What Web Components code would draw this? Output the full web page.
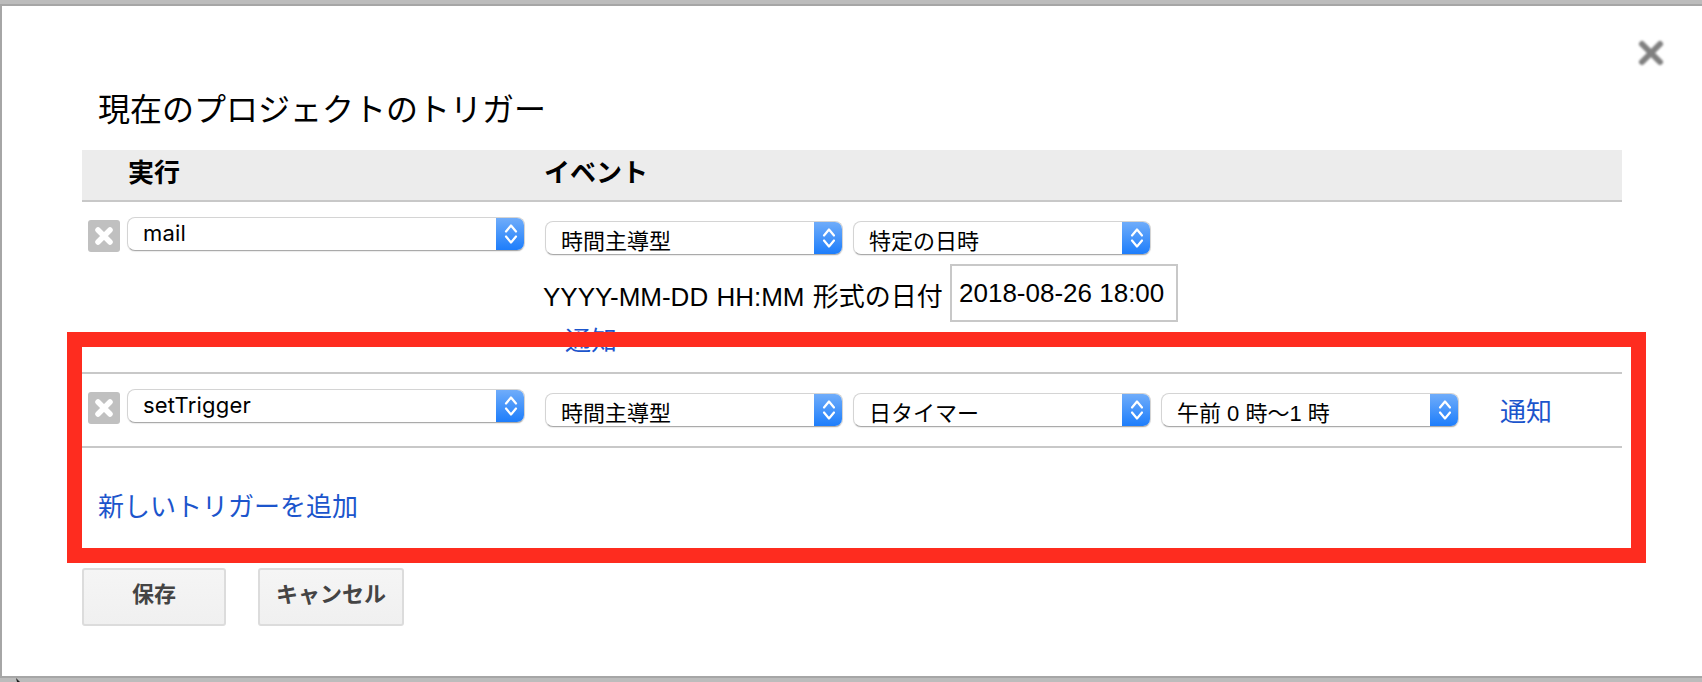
<!DOCTYPE html>
<html lang="ja">
<head>
<meta charset="utf-8">
<title>現在のプロジェクトのトリガー</title>
<style>
  html, body {
    margin: 0;
    height: 682px;
    overflow: hidden;
    background: #bcbcbc;
  }
  .pointer { position: absolute; left: 15px; top: 678px; }
</style>
</head>
<body>
<trigger-dialog heading="現在のプロジェクトのトリガー" add-label="新しいトリガーを追加">
  <trigger-row fn="mail" fn-font="Inter">
    <mac-select label="時間主導型"></mac-select>
    <mac-select label="特定の日時"></mac-select>
    <date-field slot="extra" label="YYYY-MM-DD HH:MM 形式の日付" value="2018-08-26 18:00"></date-field>
    <a slot="notify-below" href="#">通知</a>
  </trigger-row>
  <trigger-row fn="setTrigger" fn-font="Inter">
    <mac-select label="時間主導型"></mac-select>
    <mac-select label="日タイマー"></mac-select>
    <mac-select label="午前 0 時〜1 時"></mac-select>
    <a slot="notify" href="#">通知</a>
  </trigger-row>
</trigger-dialog>
<svg class="pointer" width="6" height="4" viewBox="0 0 6 4"><path d="M1 0l4 4H2z" fill="#222"/></svg>

<script>
  const FONT = '"Liberation Sans", "Noto Sans CJK JP", sans-serif';

  class MacSelect extends HTMLElement {
    connectedCallback() {
      this.attachShadow({mode: 'open'});
      this.shadowRoot.innerHTML = `
        <style>
          :host {
            display: block;
            box-sizing: border-box;
            width: var(--select-width, 298px);
            height: 34px;
            font: 22px ${FONT};
            color: #000;
          }
          .box {
            display: flex;
            height: 100%;
            box-sizing: border-box;
            background: #fff;
            border: 1px solid #d4d4d4;
            border-bottom: 1px solid #aaa;
            border-radius: 8px;
            box-shadow: 0 1px 1px rgba(0,0,0,.08);
            overflow: hidden;
          }
          .text {
            flex: 1;
            padding: var(--select-text-top, 5px) 0 0 var(--select-pad, 15px);
            line-height: 30px;
            white-space: nowrap;
            overflow: hidden;
          }
          .arrow {
            flex: 0 0 29px;
            margin: -1px -1px -1px 0;
            display: flex;
            align-items: center;
            justify-content: center;
            background: linear-gradient(#72aefa, #1b7cfb);
          }
        </style>
        <div class="box">
          <div class="text">${this.getAttribute('label')}</div>
          <div class="arrow">
            <svg width="14" height="24" viewBox="0 0 14 24" fill="none" stroke="#fff" stroke-width="2.2" stroke-linecap="round" stroke-linejoin="round">
              <path d="M2 9.5 7 3.5l5 6"/>
              <path d="M2 14.5 7 20.5l5-6"/>
            </svg>
          </div>
        </div>`;
    }
  }
  customElements.define('mac-select', MacSelect);

  class DateField extends HTMLElement {
    connectedCallback() {
      this.attachShadow({mode: 'open'});
      this.shadowRoot.innerHTML = `
        <style>
          :host {
            display: flex;
            align-items: center;
            gap: 9px;
            margin-top: 9px;
            font: 26px ${FONT};
            color: #000;
          }
          .label { width: 396px; white-space: nowrap; margin-left: -2px; margin-right: 2px; padding-top: 3px; word-spacing: 1px; }
          .input {
            box-sizing: border-box;
            width: 228px;
            height: 58px;
            border: 2px solid #c8c8c8;
            padding: 9px 0 0 7px;
            line-height: 36px;
            white-space: nowrap;
          }
        </style>
        <span class="label">${this.getAttribute('label')}</span>
        <div class="input">${this.getAttribute('value')}</div>`;
    }
  }
  customElements.define('date-field', DateField);

  class RemoveButton extends HTMLElement {
    connectedCallback() {
      this.attachShadow({mode: 'open'});
      this.shadowRoot.innerHTML = `
        <style>
          :host {
            display: flex;
            align-items: center;
            justify-content: center;
            flex: none;
            width: 32px;
            height: 32px;
            background: #c0c0c0;
            border-radius: 3px;
          }
        </style>
        <svg width="20" height="20" viewBox="0 0 20 20" stroke="#fff" stroke-width="5.5" stroke-linecap="round">
          <path d="M4 4l12 12M16 4L4 16"/>
        </svg>`;
    }
  }
  customElements.define('remove-button', RemoveButton);

  class TriggerRow extends HTMLElement {
    connectedCallback() {
      this.attachShadow({mode: 'open'});
      const fn = this.getAttribute('fn');
      const fnFont = this.getAttribute('fn-font');
      this.shadowRoot.innerHTML = `
        <style>
          :host {
            display: flex;
            box-sizing: border-box;
            padding: 15px 0 19px 6px;
            border-bottom: 2px solid #c8c8c8;
            font: 26px ${FONT};
          }
          remove-button { margin-top: 3px; }
          .fn {
            margin-left: 7px;
            --select-width: 398px;
            --select-pad: 15px;
            --select-text-top: 0px;
          }
          .fn mac-select { font-family: ${fnFont}, sans-serif; letter-spacing: .2px; }
          .event { margin-left: 20px; padding-top: 4px; }
          .line { display: flex; align-items: flex-start; gap: 10px; }
          ::slotted(a) { color: #1c55cc; text-decoration: none; font-size: 26px; line-height: 38px; }
          ::slotted(a[slot="notify"]) { margin: 0 0 0 31px; height: 34px; }
          ::slotted(a[slot="notify-below"]) { margin-left: 20px; display: block; height: 31px; }
        </style>
        <remove-button></remove-button>
        <div class="fn"><mac-select label="${fn}"></mac-select></div>
        <div class="event">
          <div class="line"><slot></slot><slot name="notify"></slot></div>
          <slot name="extra"></slot>
          <slot name="notify-below"></slot>
        </div>`;
    }
  }
  customElements.define('trigger-row', TriggerRow);

  class TriggerDialog extends HTMLElement {
    connectedCallback() {
      this.attachShadow({mode: 'open'});
      this.shadowRoot.innerHTML = `
        <style>
          :host {
            display: block;
            box-sizing: border-box;
            position: relative;
            height: 674px;
            margin-top: 4px;
            border: solid #a6a6a6;
            border-width: 2px 0 2px 2px;
            background: #fff;
            font-family: ${FONT};
            color: #000;
          }
          .close { position: absolute; left: 1635px; top: 33px; filter: blur(.9px); }
          h1 {
            margin: 0;
            padding: 74px 0 10px 96px;
            font-size: 32px;
            font-weight: 400;
            line-height: 60px;
          }
          .table { margin: 0 80px 0 80px; }
          .head {
            display: flex;
            height: 52px;
            box-sizing: border-box;
            background: #ececec;
            border-bottom: 2px solid #c8c8c8;
            font-size: 26px;
            font-weight: 700;
            line-height: 46px;
            white-space: nowrap;
          }
          .head span:first-child { width: 462px; padding-left: 46px; box-sizing: border-box; }
          .add {
            display: block;
            margin: 40px 0 0 96px;
            color: #1c55cc;
            text-decoration: none;
            font-size: 26px;
            line-height: 38px;
          }
          .buttons { display: flex; gap: 32px; margin: 42px 0 0 80px; }
          .btn {
            box-sizing: border-box;
            height: 58px;
            border: 2px solid #dcdcdc;
            border-radius: 3px;
            background: linear-gradient(#f5f5f5, #f0f0f0);
            color: #444;
            font-size: 22px;
            font-weight: 700;
            line-height: 50px;
            text-align: center;
          }
          .save { width: 144px; }
          .cancel { width: 146px; }
          .mark {
            position: absolute;
            left: 65px;
            top: 326px;
            box-sizing: border-box;
            width: 1579px;
            height: 231px;
            border: 15px solid #fe2c1f;
            pointer-events: none;
          }
        </style>
        <svg class="close" width="28" height="28" viewBox="0 0 28 28" stroke="#808080" stroke-width="6" stroke-linecap="round">
          <path d="M5 5l18 18M23 5L5 23"/>
        </svg>
        <h1>${this.getAttribute('heading')}</h1>
        <div class="table">
          <div class="head"><span>実行</span><span>イベント</span></div>
          <slot></slot>
        </div>
        <a class="add" href="#">${this.getAttribute('add-label')}</a>
        <div class="buttons">
          <div class="btn save">保存</div>
          <div class="btn cancel">キャンセル</div>
        </div>
        <div class="mark"></div>`;
    }
  }
  customElements.define('trigger-dialog', TriggerDialog);
</script>
</body>
</html>
